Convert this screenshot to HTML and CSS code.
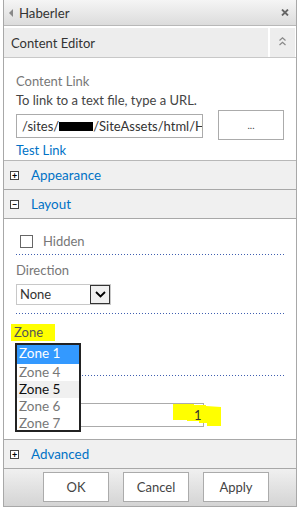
FILE: index.html
```html
<!DOCTYPE html>
<html>
<head>
<meta charset="utf-8">
<link rel="stylesheet" href="styles.css">
</head>
<body>
<div class="panel">
  <div class="title-bar">
    <span class="tri"></span>
    <span class="title">Haberler</span>
    <svg class="close" width="8" height="7" viewBox="0 0 8 7"><path d="M1 0.5 L7 6.5 M7 0.5 L1 6.5" stroke="#666" stroke-width="1.8"/></svg>
  </div>
  <div class="part-head">
    <div class="part-name">Content Editor</div>
    <div class="collapse">
      <svg width="7" height="9" viewBox="0 0 7 9"><path d="M0.5 3.5 L3.5 0.8 L6.5 3.5 M0.5 8 L3.5 5.3 L6.5 8" stroke="#888" stroke-width="1.2" fill="none"/></svg>
    </div>
  </div>
  <div class="section content">
    <div class="label">Content Link</div>
    <div class="hint">To link to a text file, type a URL.</div>
    <div class="url-row">
      <div class="url-input"><span class="seg">/sites/</span><span class="redact"></span><span class="seg">/SiteAssets/html/H</span></div>
      <div class="btn dots">...</div>
    </div>
    <div class="link">Test Link</div>
  </div>
  <div class="cat"><span class="box">+</span><span class="cat-name">Appearance</span></div>
  <div class="cat"><span class="box">&minus;</span><span class="cat-name">Layout</span></div>
  <div class="section layout">
    <div class="check-row"><span class="checkbox"></span><span class="label">Hidden</span></div>
    <div class="dotted"></div>
    <div class="label dir">Direction</div>
    <div class="select"><span class="sel-text">None</span><span class="sel-arrow"><svg width="11" height="7" viewBox="0 0 11 7"><path d="M1 1 L5.5 5.5 L10 1" stroke="#000" stroke-width="1.8" fill="none"/></svg></span></div>
    <div class="dotted gap9"></div>
    <div class="zone-row"><span class="zone-label">Zone</span></div>
    <div class="zone-area">
      <div class="dotted flat"></div>
      <div class="idx-input">
        <svg class="mark" width="48" height="23" viewBox="0 0 48 23"><path d="M0 1 L21 1 L21 2 L33 2 L33 3 L48 4 L48 23 L34 23 L34 20 L26 20 L26 18 L14 18 L14 17 L0 17 Z" fill="#ffff00"/></svg>
        <span class="idx-val">1</span>
      </div>
      <div class="listbox">
        <div class="opt sel">Zone 1</div>
        <div class="opt">Zone 4</div>
        <div class="opt hover">Zone 5</div>
        <div class="opt">Zone 6</div>
        <div class="opt">Zone 7</div>
      </div>
    </div>
  </div>
  <div class="cat"><span class="box">+</span><span class="cat-name">Advanced</span></div>
  <div class="footer">
    <div class="btn">OK</div>
    <div class="btn">Cancel</div>
    <div class="btn">Apply</div>
  </div>
</div>
</body>
</html>
```
FILE: styles.css
```css
html, body { margin: 0; padding: 0; background: #fff; }
body { font-family: Lato, "Noto Sans", sans-serif; font-size: 13px; line-height: 18px; color: #444; }
.panel {
  margin-left: 3px;
  width: 292px;
  border-left: 1px solid #a8a8a8;
  border-right: 1px solid #a8a8a8;
  border-bottom: 1px solid #a8a8a8;
}
.title-bar {
  height: 25px;
  display: flex;
  align-items: center;
  background: linear-gradient(#f5f5f5, #dcdcdc);
  border-bottom: 1px solid #b8b8b8;
}
.tri {
  width: 0; height: 0;
  border-top: 4px solid transparent;
  border-bottom: 4px solid transparent;
  border-right: 4px solid #888;
  margin-left: 5px;
  margin-right: 6px;
}
.title { font-size: 13.2px; color: #333; }
.close { margin-left: auto; margin-right: 7px; }
.part-head {
  margin-top: 2px;
  height: 29px;
  display: flex;
  background: #ededed;
  border-bottom: 1px solid #c8c8c8;
}
.part-name { flex: 1; font-size: 13px; color: #333; padding-left: 7px; line-height: 30px; }
.collapse {
  width: 28px;
  border-left: 2px solid #fff;
  border-right: 1px solid #fff;
  display: flex;
  justify-content: center;
  padding-top: 9px;
  box-sizing: border-box;
}
.section { background: #fff; padding: 0 12px; }
.content { padding-top: 14px; border-bottom: 1px solid #b8b8b8; }
.label { color: #777; }
.hint { line-height: 19px; color: #444; margin-top: 1px; }
.url-row { display: flex; align-items: flex-start; }
.url-input {
  width: 187px; height: 24px; box-sizing: border-box;
  border: 1px solid #ababab;
  padding-left: 5px;
  white-space: nowrap; overflow: hidden;
  display: flex; align-items: center;
  margin-top: 4px;
  color: #333;
}
.seg { flex-shrink: 0; }
.redact { flex-shrink: 0; display: inline-block; width: 34px; height: 9px; background: #000; margin-top: 1px; }
.btn {
  width: 66px; height: 30px; box-sizing: border-box;
  border: 1px solid #ababab;
  background: #fff;
  display: flex; align-items: center; justify-content: center;
  color: #444; font-size: 13px;
}
.dots { margin-left: 15px; font-size: 10px; }
.link { color: #0072c6; line-height: 19px; margin-top: 1px; }
.cat {
  height: 28px;
  background: #f0f0f0;
  border-bottom: 1px solid #a8a8a8;
  display: flex; align-items: center;
  padding-left: 6px;
}
.box {
  width: 9px; height: 9px; box-sizing: border-box;
  border: 1px solid #444; background: #fff;
  display: flex; align-items: center; justify-content: center;
  font-size: 9px; line-height: 1; color: #000; font-weight: bold;
  margin-right: 12px;
}
.cat-name { color: #0072c6; font-size: 13.4px; }
.layout { padding-top: 15px; border-bottom: 1px solid #a8a8a8; }
.check-row { display: flex; align-items: center; height: 14px; padding-left: 4px; }
.checkbox { width: 13px; height: 13px; box-sizing: border-box; border: 1px solid #666; margin-right: 10px; }
.dotted {
  height: 1px;
  margin-top: 6px;
  background: repeating-linear-gradient(to right, #3f5fb0 0 1px, transparent 1px 3px);
  width: 268px;
}
.dotted.gap9 { margin-top: 8px; }
.dir { margin-top: 6px; }
.select {
  margin-top: 5px;
  width: 95px; height: 21px; box-sizing: border-box;
  border: 1px solid #c8c8c8;
  display: flex; align-items: stretch;
}
.sel-text { flex: 1; padding-left: 3px; color: #333; line-height: 19px; }
.sel-arrow {
  width: 20px; box-sizing: border-box;
  border: 1px solid #333; background: #f0f0f0;
  display: flex; align-items: center; justify-content: center;
}
.zone-row { margin-top: 9px; height: 17px; margin-left: -5px; }
.zone-label { display: inline-block; background: #ffff00; color: #555; width: 44px; height: 17px; line-height: 17px; padding-left: 3px; box-sizing: border-box; }
.zone-area { position: relative; height: 99px; padding-top: 35px; box-sizing: border-box; }
.dotted.flat { margin-top: 0; }
.idx-input {
  position: relative;
  margin-top: 27px;
  width: 188px; height: 24px; box-sizing: border-box;
  border: 1px solid #ababab;
}
.mark { position: absolute; left: 156px; top: -1px; }
.idx-val { position: absolute; left: 177px; top: 2px; color: #333; }
.listbox {
  position: absolute; left: -1px; top: 3px;
  width: 66px; height: 89px; box-sizing: border-box;
  border: 2px solid #222; background: #fff;
}
.opt { height: 17px; line-height: 17px; padding-left: 2px; color: #777; font-size: 13.5px; }
.opt.sel { background: #3399ff; color: #fff; height: 19px; }
.opt.hover { background: #f0f0f0; color: #111; }
.footer {
  height: 37px;
  box-sizing: border-box;
  background: linear-gradient(#f0f0f0, #d4d4d4);
  display: flex; align-items: flex-start;
  padding-top: 3px;
  padding-left: 39px; gap: 14px;
}
```
